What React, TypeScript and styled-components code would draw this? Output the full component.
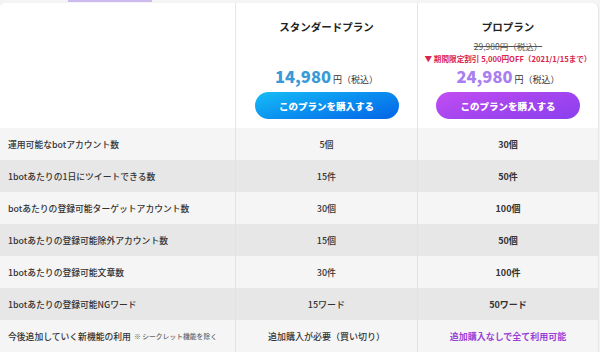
import { createGlobalStyle, styled } from 'styled-components'

type Feature = {
  label: string
  note?: string
  standard: string
  pro: string
  highlight?: boolean
}

const features: Feature[] = [
  { label: '運用可能なbotアカウント数', standard: '5個', pro: '30個' },
  { label: '1botあたりの1日にツイートできる数', standard: '15件', pro: '50件' },
  { label: 'botあたりの登録可能ターゲットアカウント数', standard: '30個', pro: '100個' },
  { label: '1botあたりの登録可能除外アカウント数', standard: '15個', pro: '50個' },
  { label: '1botあたりの登録可能文章数', standard: '30件', pro: '100件' },
  { label: '1botあたりの登録可能NGワード', standard: '15ワード', pro: '50ワード' },
  {
    label: '今後追加していく新機能の利用',
    note: '※ シークレット機能を除く',
    standard: '追加購入が必要（買い切り）',
    pro: '追加購入なしで全て利用可能',
    highlight: true,
  },
]

function App() {
  return (
    <>
      <GlobalStyle />
      <StPage>
        <StTabLine />
        <StCard>
          <StHeaderRow>
            <StHeaderCell />
            <StPlanCell>
              <StPlanName>スタンダードプラン</StPlanName>
              <StSpacer />
              <StPrice $tone="blue">
                <strong>14,980</strong>
                <span>円（税込）</span>
              </StPrice>
              <StBuyButton $tone="blue">このプランを購入する</StBuyButton>
            </StPlanCell>
            <StPlanCell>
              <StPlanName>プロプラン</StPlanName>
              <StSpacer />
              <StOldPrice>29,980円（税込）</StOldPrice>
              <StDiscount>▼ 期間限定割引 5,000円OFF（2021/1/15まで）</StDiscount>
              <StPrice $tone="purple">
                <strong>24,980</strong>
                <span>円（税込）</span>
              </StPrice>
              <StBuyButton $tone="purple">このプランを購入する</StBuyButton>
            </StPlanCell>
          </StHeaderRow>
          {features.map((f, i) => (
            <StRow key={f.label} $dark={i % 2 === 1}>
              <StLabelCell>
                {f.label}
                {f.note ? <StNote>{f.note}</StNote> : null}
              </StLabelCell>
              <StValueCell>{f.standard}</StValueCell>
              <StValueCell $bold $accent={f.highlight}>
                {f.pro}
              </StValueCell>
            </StRow>
          ))}
        </StCard>
      </StPage>
    </>
  )
}

export default App

// #region styles

const GlobalStyle = createGlobalStyle`
  html, body {
    margin: 0;
    padding: 0;
    background: #f4f4f4;
  }
  body {
    font-family: 'Noto Sans CJK JP', 'Noto Sans', sans-serif;
    color: #333;
  }
`

const StPage = styled.div`
  width: 600px;
  height: 352px;
  overflow: hidden;
  padding-top: 3px;
  box-sizing: border-box;
  position: relative;
`

const StTabLine = styled.div`
  position: absolute;
  top: 0;
  left: 68px;
  width: 84px;
  height: 2px;
  background: #cdbaf0;
`

const StCard = styled.div`
  width: 599px;
  background: #fff;
  border-right: 1px solid #e6e6e6;
  border-radius: 6px 6px 0 0;
  box-sizing: border-box;
  overflow: hidden;
`

const StHeaderRow = styled.div`
  display: grid;
  grid-template-columns: 235px 182px 181px;
  height: 125px;
`

const StHeaderCell = styled.div`
  background: #fff;
`

const StPlanCell = styled.div`
  display: flex;
  flex-direction: column;
  align-items: center;
  border-left: 1px solid #e6e6e6;
  padding: 17px 0 9px;
`

const StPlanName = styled.div`
  font-size: 10.5px;
  font-weight: 700;
  color: #222;
  line-height: 14px;
`

const StSpacer = styled.div`
  flex: 1;
`

const StOldPrice = styled.div`
  font-size: 8.5px;
  line-height: 11px;
  color: #555;
  text-decoration: line-through;
`

const StDiscount = styled.div`
  font-size: 7.6px;
  line-height: 11px;
  font-weight: 700;
  color: #d92350;
  margin-top: 1px;
  margin-bottom: 1px;
  white-space: nowrap;
`

const StPrice = styled.div<{ $tone: 'blue' | 'purple' }>`
  display: flex;
  align-items: baseline;
  margin: 1px 0 6px;
  & > strong {
    font-size: 16.5px;
    line-height: 20px;
    font-weight: 900;
    color: ${(p) => (p.$tone === 'blue' ? '#3a9ad8' : '#a87ef0')};
  }
  & > span {
    font-size: 9px;
    margin-left: 2px;
    color: #333;
  }
`

const StBuyButton = styled.button<{ $tone: 'blue' | 'purple' }>`
  width: 144px;
  height: 27px;
  border: none;
  border-radius: 14px;
  font-family: inherit;
  font-size: 9.5px;
  font-weight: 900;
  color: #fff;
  cursor: pointer;
  background: ${(p) =>
    p.$tone === 'blue'
      ? 'linear-gradient(165deg, #16bdf6 0%, #0a8ff0 50%, #0563e6 100%)'
      : 'linear-gradient(165deg, #c24ef2 0%, #a445ef 50%, #8a3fee 100%)'};
`

const StRow = styled.div<{ $dark: boolean }>`
  display: grid;
  grid-template-columns: 235px 182px 181px;
  height: 32px;
  background: ${(p) => (p.$dark ? '#e7e7e7' : '#f5f5f5')};
`

const StLabelCell = styled.div`
  display: flex;
  align-items: center;
  padding-left: 8px;
  font-size: 8.8px;
  font-weight: 500;
  color: #333;
  white-space: nowrap;
`

const StNote = styled.span`
  font-size: 6.8px;
  color: #666;
  margin-left: 3px;
`

const StValueCell = styled.div<{ $bold?: boolean; $accent?: boolean }>`
  display: flex;
  align-items: center;
  justify-content: center;
  border-left: 1px solid #e2e2e2;
  font-size: 9px;
  font-weight: ${(p) => (p.$bold ? 700 : 500)};
  color: ${(p) => (p.$accent ? '#9a3fd8' : '#333')};
`

// #endregion styles
